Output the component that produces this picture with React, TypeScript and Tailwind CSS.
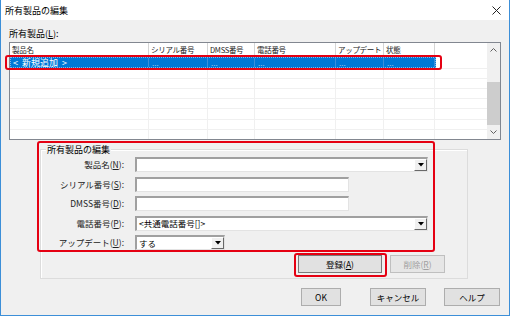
import React from "react";

const font = { fontFamily: '"Noto Sans CJK JP", "Noto Sans", sans-serif' };

const columns = [
  { label: "製品名", w: "w-[139px]", value: "<  新規追加  >" },
  { label: "シリアル番号", w: "w-[59px]", value: "..." },
  { label: "DMSS番号", w: "w-[47px]", value: "..." },
  { label: "電話番号", w: "w-[81px]", value: "..." },
  { label: "アップデート", w: "w-[48px]", value: "..." },
  { label: "状態", w: "w-[51px]", value: "..." },
];

function Mnemonic({ text, k, colon = true }: { text: string; k: string; colon?: boolean }) {
  return (
    <span className="whitespace-nowrap">
      {text}(<span className="underline">{k}</span>){colon ? ":" : ""}
    </span>
  );
}

function ComboArrow() {
  return (
    <div className="ml-auto flex h-full w-[13px] shrink-0 items-center justify-center border border-t-white border-l-white border-b-[#696969] border-r-[#696969] bg-[#f0f0f0]">
      <svg width="6" height="4" viewBox="0 0 6 4">
        <path d="M0 0h6L3 3.5z" fill="#000" />
      </svg>
    </div>
  );
}

function Edit({ w, children, combo }: { w: string; children?: React.ReactNode; combo?: boolean }) {
  return (
    <div
      className={`${w} flex h-[15px] items-center border border-t-2 border-l-2 border-t-[#a0a0a0] border-l-[#a0a0a0] border-b-[#e3e3e3] border-r-[#e3e3e3] bg-white pl-[2px] text-[8.5px] leading-[11px] text-black`}
    >
      <span className="whitespace-pre">{children}</span>
      {combo && <ComboArrow />}
    </div>
  );
}

function Row({ label, k, children }: { label: string; k: string; children: React.ReactNode }) {
  return (
    <div className="flex h-[15px] items-center">
      <div className="w-[84px] shrink-0 pr-[1px] text-right text-[8.5px] leading-[11px] text-[#222]">
        <Mnemonic text={label} k={k} />
      </div>
      <div className="ml-[10px]">{children}</div>
    </div>
  );
}

function Button({ w, children, disabled, def }: { w: string; children: React.ReactNode; disabled?: boolean; def?: boolean }) {
  return (
    <div
      className={`${w} flex h-[18px] items-center justify-center border text-[8.5px] leading-[11px] ${
        disabled
          ? "border-[#bfbfbf] bg-[#e6e6e6] text-[#a0a0a0]"
          : def
          ? "border-[#7a7a7a] bg-[#e1e1e1] text-black"
          : "border-[#adadad] bg-[#e1e1e1] text-black"
      }`}
    >
      {children}
    </div>
  );
}

export default function App() {
  const emptyRows = Array.from({ length: 7 });
  return (
    <div style={font} className="relative flex h-[316px] w-[510px] flex-col overflow-hidden border-x border-b border-[#3c8fd8] bg-white">
      {/* title bar */}
      <div className="flex h-[20px] shrink-0 items-center bg-white pl-[4px] pr-[8px]">
        <span className="text-[9px] leading-[11px] text-black">所有製品の編集</span>
        <svg className="ml-auto" width="9" height="9" viewBox="0 0 9 9">
          <path d="M0.5 0.5l8 8M8.5 0.5l-8 8" stroke="#222" strokeWidth="1" />
        </svg>
      </div>

      {/* body */}
      <div className="flex flex-1 flex-col bg-[#f0f0f0] pl-[8px] pr-[8px] pt-[7px]">
        <div className="flex h-[12px] items-center text-[9px] leading-[11px] text-black">
          <Mnemonic text="所有製品" k="L" />
        </div>

        {/* list */}
        <div className="mt-[3px] flex h-[98px] w-[492px] border border-[#828790] bg-white">
          <div className="flex flex-col">
            <div className="flex h-[14px]">
              {columns.map((c) => (
                <div
                  key={c.label}
                  className={`${c.w} flex items-center overflow-hidden whitespace-nowrap border-r border-[#d5d5d5] pl-[2px] text-[7.5px] leading-[11px] tracking-[-0.3px] text-[#222]`}
                >
                  {c.label}
                </div>
              ))}
              <div className="w-[52px]" />
            </div>
            <div className="flex h-[11px]">
              <div className="flex border border-dotted border-[#7fb6ea] bg-[#0078d7]">
                {columns.map((c, i) => (
                  <div
                    key={c.label}
                    className={`${c.w} ${i === 0 ? "-ml-[1px] text-[9px] text-white" : "text-[8px] text-[#9cc4ec]"} flex items-center whitespace-pre border-r border-[#3a8fdc] pl-[3px] leading-[9px]`}
                  >
                    {c.value}
                  </div>
                ))}
              </div>
            </div>
            {emptyRows.map((_, r) => (
              <div key={r} className="flex h-[10.5px] border-t border-[#f0f0f0]">
                {columns.map((c) => (
                  <div key={c.label} className={`${c.w} border-r border-[#f0f0f0]`} />
                ))}
                <div className="w-[52px]" />
              </div>
            ))}
          </div>
          {/* scrollbar */}
          <div className="ml-auto flex w-[13px] flex-col items-center bg-[#f0f0f0]">
            <div className="flex h-[14px] items-center justify-center">
              <svg width="7" height="4" viewBox="0 0 7 4">
                <path d="M0.5 3.5l3-3 3 3" stroke="#606060" fill="none" />
              </svg>
            </div>
            <div className="mt-[25px] h-[43px] w-[13px] bg-[#cdcdcd]" />
            <div className="mt-auto flex h-[14px] items-center justify-center">
              <svg width="7" height="4" viewBox="0 0 7 4">
                <path d="M0.5 0.5l3 3 3-3" stroke="#606060" fill="none" />
              </svg>
            </div>
          </div>
        </div>

        {/* group box */}
        <div className="relative ml-[31px] mt-[9px] flex h-[130px] w-[428px] flex-col border border-[#dcdcdc] pt-[7px] shadow-[inset_1px_1px_0_#ffffff]">
          <div className="absolute -top-[6px] left-[5px] bg-[#f0f0f0] px-[1px] text-[9px] leading-[11px] text-black">所有製品の編集</div>
          <div className="flex flex-col gap-[4.5px]">
            <Row label="製品名" k="N">
              <Edit w="w-[293px]" combo />
            </Row>
            <Row label="シリアル番号" k="S">
              <Edit w="w-[214px]" />
            </Row>
            <Row label="DMSS番号" k="D">
              <Edit w="w-[214px]" />
            </Row>
            <Row label="電話番号" k="P">
              <Edit w="w-[293px]" combo>
                {"<共通電話番号[]>"}
              </Edit>
            </Row>
            <Row label="アップデート" k="U">
              <Edit w="w-[90px]" combo>
                する
              </Edit>
            </Row>
          </div>
          <div className="mt-[5px] flex justify-end gap-[8px] pr-[22px]">
            <Button w="w-[84px]" def>
              <Mnemonic text="登録" k="A" colon={false} />
            </Button>
            <Button w="w-[55px]" disabled>
              <Mnemonic text="削除" k="R" colon={false} />
            </Button>
          </div>
        </div>

        {/* dialog buttons */}
        <div className="mt-[9px] flex justify-end pr-[1px]">
          <Button w="w-[40px]">OK</Button>
          <div className="ml-[29px]">
            <Button w="w-[56px]">キャンセル</Button>
          </div>
          <div className="ml-[18px]">
            <Button w="w-[56px]">ヘルプ</Button>
          </div>
        </div>
      </div>

      {/* red highlight frames */}
      <div className="pointer-events-none absolute left-[4px] top-[55px] h-[15px] w-[437px] rounded-[3px] border-2 border-[#e50012]" />
      <div className="pointer-events-none absolute left-[36px] top-[141px] h-[111px] w-[398px] rounded-[3px] border-2 border-[#e50012]" />
      <div className="pointer-events-none absolute left-[293px] top-[253px] h-[24px] w-[93px] rounded-[3px] border-2 border-[#e50012]" />
    </div>
  );
}
